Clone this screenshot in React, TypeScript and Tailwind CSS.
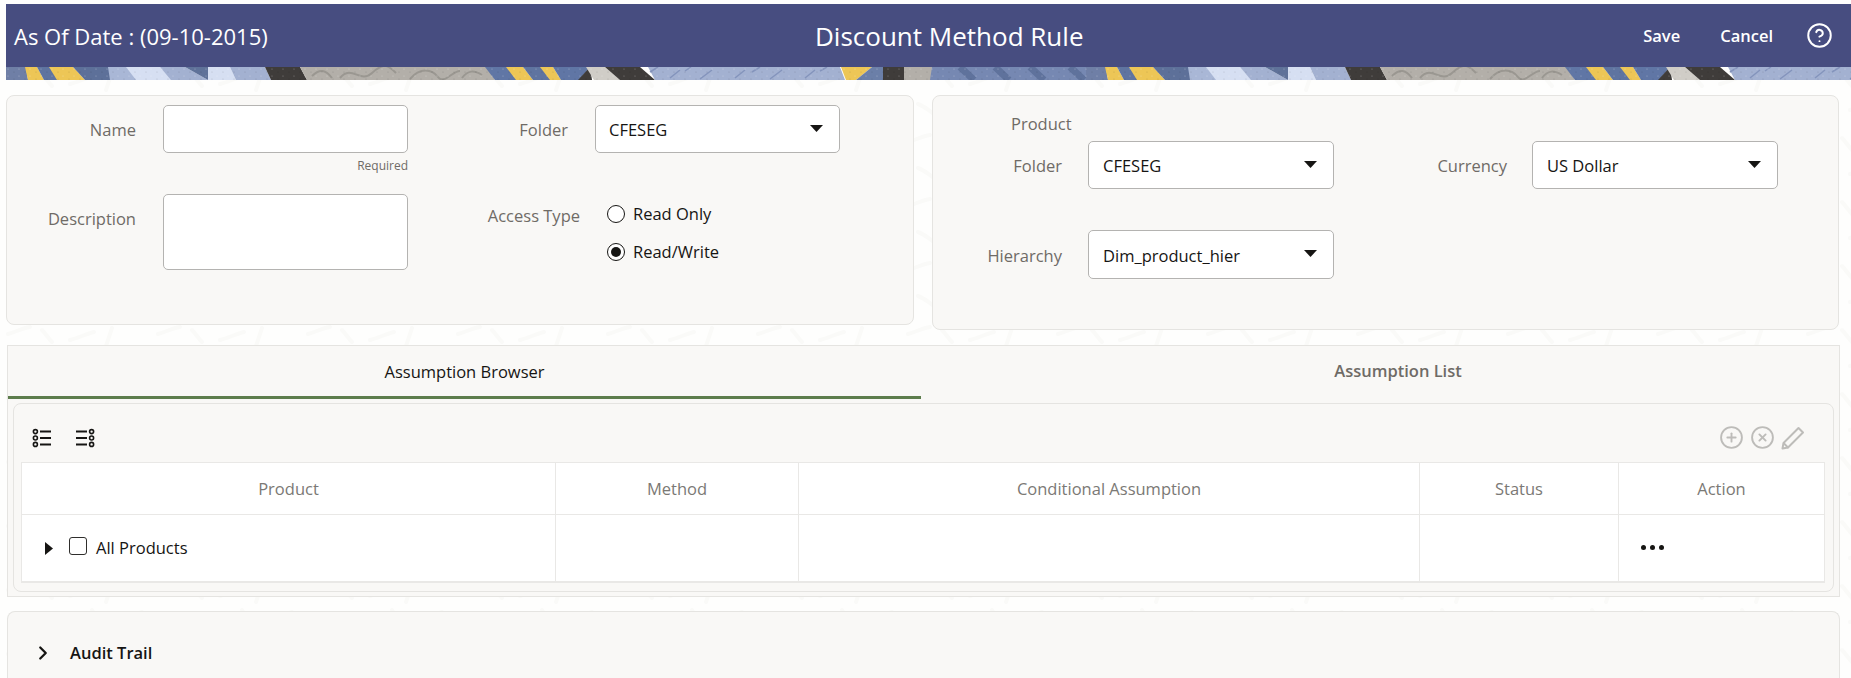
import { ChevronRight, CircleHelp, CirclePlus, CircleX } from "lucide-react"

const bandParts: [string, string][] = [
  ["#6f7fa6", "6,0 26,0 28,13 6,13"],
  ["#edc656", "25,0 37,0 44,13 28,13"],
  ["#5f74a0", "37,0 50,0 58,13 44,13"],
  ["#edc656", "49,0 73,0 85,13 57,13"],
  ["#5d7099", "73,0 110,0 111,13 85,13"],
  ["#a9b7d6", "108,0 128,0 137,13 110,13"],
  ["#d6dff2", "126,0 160,0 172,13 136,13"],
  ["#a3b1d1", "160,0 185,0 208,13 171,13"],
  ["#5f7299", "185,0 208,0 208,13"],
  ["#d6dff2", "208,0 230,0 236,13 208,13"],
  ["#a3b1d1", "230,0 265,0 271,13 236,13"],
  ["#3f3c3a", "265,0 300,0 307,13 271,13"],
  ["#b3afa9", "300,0 487,0 495,13 307,13"],
  ["#6076a5", "485,0 507,0 517,13 495,13"],
  ["#edc656", "506,0 523,0 533,13 516,13"],
  ["#5f74a0", "523,0 541,0 551,13 533,13"],
  ["#edc656", "540,0 553,0 561,13 550,13"],
  ["#6076a5", "553,0 590,0 579,13 561,13"],
  ["#3f3c3a", "590,0 590,0 592,13 578,13"],
  ["#d0cdc7", "586,0 605,0 620,13 594,13"],
  ["#3f3c3a", "605,0 640,0 655,13 620,13"],
  ["#a3b1d1", "648,0 840,0 845,13 655,13"],
  ["#edc656", "841,0 872,0 856,13 846,13"],
  ["#6b7fa8", "872,0 883,0 883,13 856,13"],
  ["#3f3c3a", "883,0 904,0 904,13 883,13"],
  ["#b3afa9", "904,0 935,0 932,13 904,13"],
  ["#7688b2", "932,0 1106,0 1106,13 930,13"],
]

const squiggles =
  "M312 9c8-8 14-6 20 2M340 11c12-14 20 6 32-5s16-8 24 0M410 12c10-12 22-10 28-2s14-6 22-6M462 11c6-8 12-8 20-3"
const slashes = "M670 11l10-8M700 12l12-9M735 11l10-8M770 12l12-9M805 11l10-8M650 5l8-5M685 4l6-4M752 5l8-5M820 4l7-4"

function HeaderBand() {
  const art = (
    <>
      {bandParts.map(([fill, points]) => (
        <polygon key={points} fill={fill} points={points} />
      ))}
      <path d={squiggles} stroke="#9a9791" strokeWidth="2" fill="none" />
      <path d={slashes} stroke="#8494bc" strokeWidth="1.5" fill="none" />
      <path d="M960 0l14 13M995 0l14 13M1030 0l14 13M1070 0l14 13" stroke="#5f729c" strokeWidth="7" fill="none" />
    </>
  )
  return (
    <svg width="1845" height="13" className="block">
      <defs>
        <pattern id="speckle" width="11" height="7" patternUnits="userSpaceOnUse">
          <circle cx="2" cy="2" r="0.6" fill="#ffffff" fillOpacity="0.35" />
          <circle cx="8" cy="5" r="0.6" fill="#000000" fillOpacity="0.15" />
        </pattern>
      </defs>
      <g transform="translate(-6 0)">{art}</g>
      <g transform="translate(1074 0)">{art}</g>
      <rect width="1845" height="13" fill="url(#speckle)" />
    </svg>
  )
}

function PageTexture() {
  return (
    <svg className="absolute inset-0" width="1851" height="678">
      <defs>
        <pattern id="dashes" width="150" height="64" patternUnits="userSpaceOnUse">
          <path
            d="M8 14c8-2 14-6 22-7M42 10c4 4 6 8 10 12M70 20c8-2 16-6 24-8M112 8c-2 6-4 12-6 18M18 40c6 2 10 6 16 10M50 46c8-2 18-4 26-6M92 34c4 6 6 14 8 20M120 44c8-2 14-6 22-8"
            stroke="#fafaf8"
            strokeWidth="4"
            strokeLinecap="round"
            fill="none"
          />
        </pattern>
      </defs>
      <rect width="1851" height="678" fill="#fefefd" />
      <rect width="1851" height="678" fill="url(#dashes)" />
    </svg>
  )
}

function Caret() {
  return (
    <svg width="13" height="7" viewBox="0 0 13 7" className="mb-[2px]">
      <polygon points="0,0 13,0 6.5,7" fill="#161513" />
    </svg>
  )
}

function Select({ value, wide }: { value: string; wide?: boolean }) {
  return (
    <div
      className={`flex h-full w-full items-center justify-between rounded-[5px] border border-[#b4b3b1] bg-white pr-[16px] text-[#161513] ${
        wide ? "pl-[14px]" : "pl-[13px]"
      }`}
    >
      <span className="pt-[2px]">{value}</span>
      <Caret />
    </div>
  )
}

function ListIcon({ flip }: { flip?: boolean }) {
  return (
    <svg width="20" height="20" viewBox="0 0 20 20" fill="none" stroke="#161513" className={flip ? "-scale-x-100" : ""}>
      <circle cx="3.4" cy="3.6" r="2" strokeWidth="1.6" />
      <circle cx="3.4" cy="10" r="2" strokeWidth="1.6" />
      <circle cx="3.4" cy="16.4" r="2" strokeWidth="1.6" />
      <path d="M8 3.6h11M8 10h11M8 16.4h11" strokeWidth="2" />
    </svg>
  )
}

function PencilIcon() {
  return (
    <svg width="24" height="24" viewBox="0 0 24 24" fill="none" stroke="#bdbcb9" strokeWidth="2" strokeLinejoin="round">
      <path d="M1.5 22.5l1-5.5L17.5 2l4.5 4.5L7 21.5z" />
      <path d="M2.5 17l5 5" />
    </svg>
  )
}

function Radio({ checked, label }: { checked?: boolean; label: string }) {
  return (
    <div className="flex h-[24px] items-center gap-[8px] text-[#161513]">
      <span className="flex size-[18px] items-center justify-center rounded-full border-[1.5px] border-[#161513] bg-white">
        {checked && <span className="size-[10px] rounded-full bg-[#161513]" />}
      </span>
      {label}
    </div>
  )
}

const labelClass = "shrink-0 pt-[2px] text-right text-[#6f6b66]"
const headClass = "flex items-center justify-center border-r border-[#e9e8e6] text-[#7b7975]"
const cellClass = "border-r border-[#e9e8e6]"

export default function App() {
  return (
    <div className="relative h-[678px] w-[1851px] overflow-hidden font-['Open_Sans',sans-serif] text-[16.5px] leading-[24px]">
      <PageTexture />
      <div className="relative flex h-full flex-col pl-[6px] pt-[4px]">
        <header className="flex h-[63px] items-center bg-[#474d80] pl-[8px] pr-[18px] text-white">
          <div className="w-[801px] text-[22px]">As Of Date : (09-10-2015)</div>
          <h1 className="w-[266px] whitespace-nowrap text-center text-[26px]">Discount Method Rule</h1>
          <div className="ml-auto flex items-center font-semibold">
            <span>Save</span>
            <span className="ml-[40px]">Cancel</span>
            <CircleHelp size={27} strokeWidth={1.75} className="ml-[33px]" />
          </div>
        </header>
        <HeaderBand />

        <div className="mt-[15px] flex items-start gap-[18px]">
          {/* name / folder panel */}
          <section className="flex h-[230px] w-[908px] rounded-lg border border-[#e5e4e1] bg-[#f9f8f6] pt-[9px]">
            <div className="w-[401px]">
              <div className="flex h-[48px] items-center">
                <label className={`w-[129px] ${labelClass}`}>Name</label>
                <input className="ml-[27px] h-full w-[245px] rounded-[5px] border border-[#b4b3b1] bg-white" />
              </div>
              <div className="mt-[2px] h-[39px] text-right text-[12px] leading-[22px] text-[#6f6b66]">Required</div>
              <div className="flex">
                <label className={`mt-[11px] w-[129px] ${labelClass}`}>Description</label>
                <div className="ml-[27px] h-[76px] w-[245px] rounded-[5px] border border-[#b4b3b1] bg-white" />
              </div>
            </div>
            <div>
              <div className="flex h-[48px] items-center">
                <label className={`w-[160px] ${labelClass}`}>Folder</label>
                <div className="ml-[27px] h-full w-[245px]">
                  <Select value="CFESEG" />
                </div>
              </div>
              <div className="mt-[49px] flex">
                <label className={`w-[172px] ${labelClass}`}>Access Type</label>
                <div className="ml-[27px] flex flex-col gap-[14px]">
                  <Radio label="Read Only" />
                  <Radio checked label="Read/Write" />
                </div>
              </div>
            </div>
          </section>

          {/* product panel */}
          <section className="h-[235px] w-[907px] rounded-lg border border-[#e5e4e1] bg-[#f9f8f6] pt-[16px]">
            <div className="ml-[78px] text-[#6f6b66]">Product</div>
            <div className="mt-[5px] flex h-[48px] items-center">
              <label className={`w-[129px] ${labelClass}`}>Folder</label>
              <div className="ml-[26px] h-full w-[246px]">
                <Select wide value="CFESEG" />
              </div>
              <label className={`w-[173px] ${labelClass}`}>Currency</label>
              <div className="ml-[25px] h-full w-[246px]">
                <Select wide value="US Dollar" />
              </div>
            </div>
            <div className="mt-[41px] flex h-[49px] items-center">
              <label className={`w-[129px] ${labelClass}`}>Hierarchy</label>
              <div className="ml-[26px] h-full w-[246px]">
                <Select wide value="Dim_product_hier" />
              </div>
            </div>
          </section>
        </div>

        {/* assumption tabs */}
        <section className="ml-[1px] mt-[15px] h-[252px] w-[1833px] border border-[#e5e4e1] bg-[#f9f8f6] px-[5px]">
          <div className="-mx-[5px] flex h-[53px]">
            <div className="flex w-[913px] items-center justify-center border-b-[3px] border-[#5d7d4c] pt-[2px] text-[#161513]">
              Assumption Browser
            </div>
            <div className="flex flex-1 items-center justify-center pb-[3px] pl-[36px] font-semibold text-[#6f6b66]">
              Assumption List
            </div>
          </div>
          <div className="mt-[4px] h-[189px] rounded-lg border border-[#e5e4e1] pb-[9px] pl-[7px] pr-[8px]">
            <div className="flex h-[58px] items-center pl-[11px] pr-[20px] pt-[9px]">
              <ListIcon />
              <div className="ml-[23px]">
                <ListIcon flip />
              </div>
              <div className="ml-auto flex items-center gap-[6px] text-[#bdbcb9]">
                <CirclePlus size={25} strokeWidth={1.8} />
                <CircleX size={25} strokeWidth={1.8} />
                <PencilIcon />
              </div>
            </div>
            <div className="grid h-[121px] grid-cols-[534px_243px_621px_199px_1fr] grid-rows-[52px_1fr] border border-b-2 border-[#e9e8e6] bg-white">
              <div className={`${headClass} border-b`}>Product</div>
              <div className={`${headClass} border-b`}>Method</div>
              <div className={`${headClass} border-b`}>Conditional Assumption</div>
              <div className={`${headClass} border-b`}>Status</div>
              <div className={`${headClass} border-b border-r-0`}>Action</div>
              <div className={`${cellClass} flex items-center pl-[23px] text-[#161513]`}>
                <svg width="8" height="13" viewBox="0 0 8 13">
                  <polygon points="0,0 8,6.5 0,13" fill="#161513" />
                </svg>
                <span className="mb-[4px] ml-[16px] size-[18px] rounded-[3px] border-[1.5px] border-[#2f2e2c]" />
                <span className="ml-[9px]">All Products</span>
              </div>
              <div className={cellClass} />
              <div className={cellClass} />
              <div className={cellClass} />
              <div className="flex items-center gap-[4px] pb-[1px] pl-[22px]">
                <span className="size-[5px] rounded-full bg-[#161513]" />
                <span className="size-[5px] rounded-full bg-[#161513]" />
                <span className="size-[5px] rounded-full bg-[#161513]" />
              </div>
            </div>
          </div>
        </section>

        {/* audit trail */}
        <section className="ml-[1px] mt-[14px] flex h-[67px] w-[1833px] items-center rounded-t-lg border border-b-0 border-[#e5e4e1] bg-[#f9f8f6] pl-[24px] pt-[16px] font-semibold text-[#161513]">
          <ChevronRight size={22} strokeWidth={2.5} className="mr-[16px] shrink-0" />
          Audit Trail
        </section>
      </div>
    </div>
  )
}
